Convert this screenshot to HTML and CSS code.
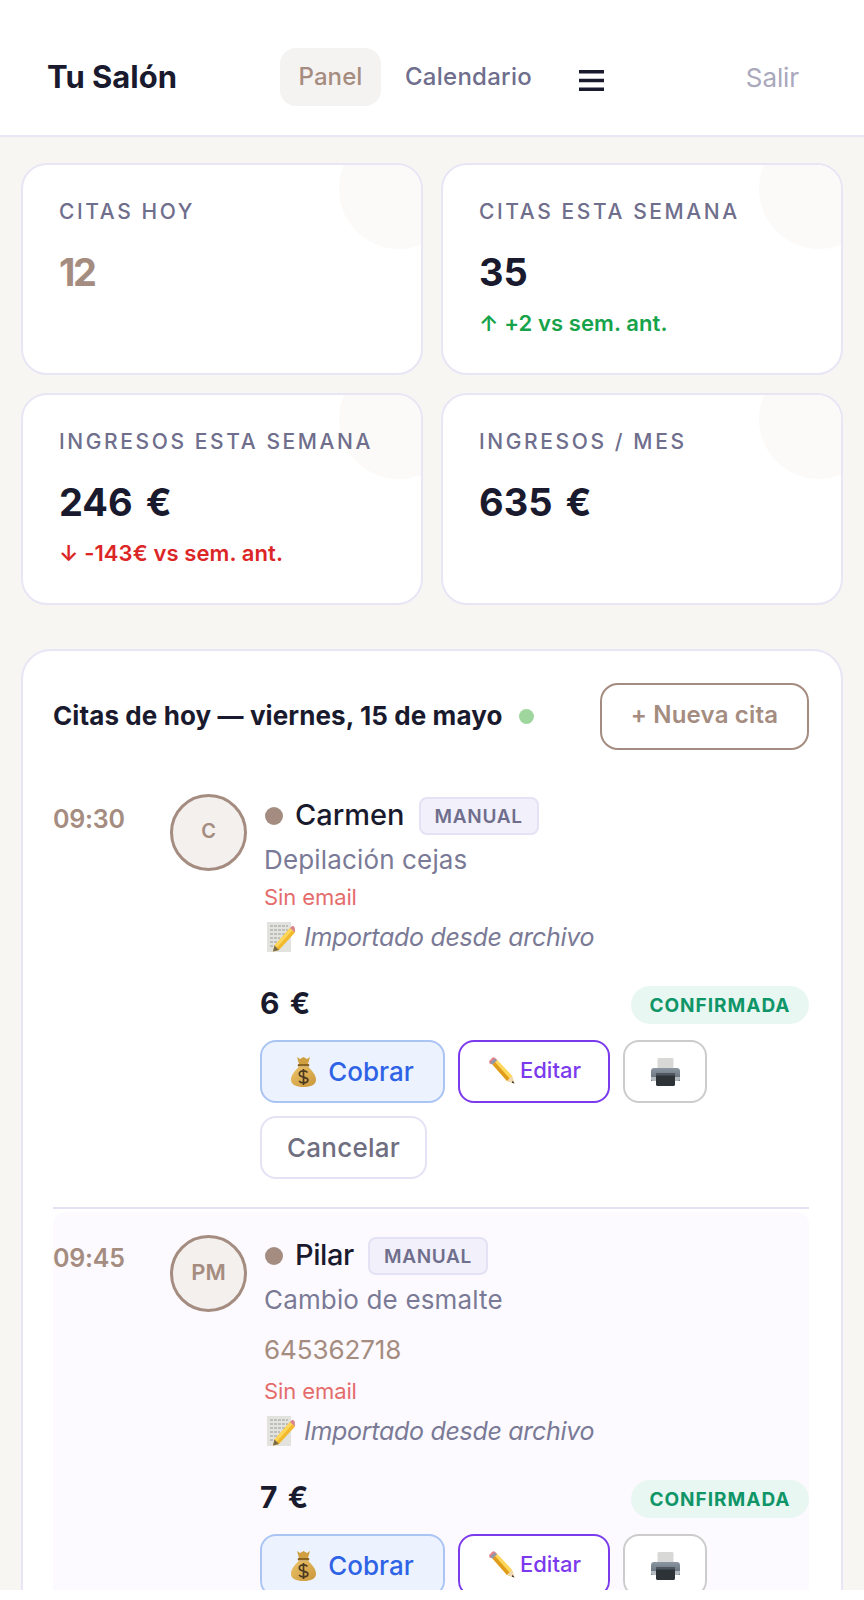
FILE: index.html
```html
<!DOCTYPE html>
<html lang="es">
<head>
<meta charset="utf-8">
<title>Tu Salón</title>
<link rel="stylesheet" href="styles.css">
</head>
<body>
<svg class="sprite" width="0" height="0" aria-hidden="true">
  <defs>
    <linearGradient id="g-bag" x1="0" y1="0" x2="1" y2="1">
      <stop offset="0" stop-color="#edc468"/>
      <stop offset="1" stop-color="#c9953a"/>
    </linearGradient>
    <linearGradient id="g-printer" x1="0" y1="0" x2="0" y2="1">
      <stop offset="0" stop-color="#8b96a0"/>
      <stop offset="1" stop-color="#5f6a75"/>
    </linearGradient>
  </defs>
  <symbol id="i-bag" viewBox="0 0 25 31">
    <path d="M6 1 9 3 12.500 1 16 3 19 1 17 8H8Z" fill="#cf9f42"/>
    <path d="M8 8h9c.8 0 1.300.5 1.300 1.200s-.5 1.300-1.300 1.300H8c-.8 0-1.300-.6-1.300-1.300S7.200 8 8 8Z" fill="#8a6420"/>
    <path d="M8 10.500h9C20.500 14.500 25 18.500 25 23.500 25 29 20 31 12.500 31S0 29 0 23.500C0 18.500 4.500 14.500 8 10.500Z" fill="url(#g-bag)"/>
    <path d="M16.500 16.500c-.9-1.100-2.300-1.700-4-1.700-2.500 0-4.200 1.200-4.200 3.100 0 4.200 8.600 2.300 8.600 6.200 0 1.700-1.900 2.800-4.400 2.800-1.800 0-3.400-.7-4.400-1.900M12.500 13v16" fill="none" stroke="#4a3a22" stroke-width="1.700"/>
  </symbol>
  <symbol id="i-pencil" viewBox="0 0 28 28">
    <path d="M5.500 8.500 10 4 25 20 27.500 27.500 20 25Z" fill="#f5bf2e"/>
    <path d="M10 4 25 20 22.500 22.500 7.500 6.500Z" fill="#ffd75a"/>
    <path d="M5.500 8.500 20 25 22.500 22.500 8 6Z" fill="#e09c1c"/>
    <path d="M25 20 27.500 27.500 20 25Z" fill="#eed9b4"/>
    <path d="M25.700 24.800 27.500 27.500 24.800 26.800Z" fill="#333"/>
    <path d="M2 5.200 5 2c1-.9 2.300-.9 3.200 0L10 4 5.500 8.500 2.500 7.500Z" fill="#e7828a"/>
    <path d="M3 6.500 7.800 2.500 10 4 5.500 8.500Z" fill="#8d98a8"/>
  </symbol>
  <symbol id="i-printer" viewBox="0 0 29 28">
    <path d="M6.500 1.500C6.500.7 7.200 0 8 0H21C21.800 0 22.500.7 22.500 1.500V11H6.500Z" fill="#d8d8d6"/>
    <path d="M3 10H26C27.700 10 29 11.300 29 13V23H0V13C0 11.300 1.300 10 3 10Z" fill="url(#g-printer)"/>
    <path d="M0 19H29V21C29 22.100 28.100 23 27 23H2C.9 23 0 22.100 0 21Z" fill="#b3bac0"/>
    <path d="M5 17H24V26.500C24 27.300 23.300 28 22.500 28H6.500C5.700 28 5 27.300 5 26.500Z" fill="#2e3338"/>
    <path d="M5 15H24V17.500H5Z" fill="#4d5660"/>
  </symbol>
  <symbol id="i-memo" viewBox="0 0 29 30">
    <path d="M1 0H25V30H1Z" fill="#e2e2de"/>
    <path d="M4 4H22M4 8H22M4 12H22M4 16H14M4 20H11M4 24H10" stroke="#9a9a98" stroke-width="1" stroke-dasharray="3 1"/>
    <path d="M24 6 29 10.500 13 28 7 29.500 8.500 23.500Z" fill="#f3b92c"/>
    <path d="M24 6 26.500 8.200 10.500 26 8.500 23.500Z" fill="#fbd65a"/>
    <path d="M8.500 23.500 13 28 7 29.500Z" fill="#7a6a48"/>
    <path d="M24 6 25.500 4.500C26.200 3.900 27 3.900 27.700 4.500L28.700 5.500C29 7 29 8 29 10.500Z" fill="#d9848c"/>
  </symbol>
</svg>
<div class="page">
  <header class="topbar">
    <div class="brand">Tu Salón</div>
    <nav class="nav">
      <a class="nav-link is-active">Panel</a>
      <a class="nav-link">Calendario</a>
    </nav>
    <svg class="burger" width="25" height="21" viewBox="0 0 25 21"><path d="M0 0h25v3.500H0zM0 8.750h25v3.500H0zM0 17.500h25V21H0z" fill="#1a1a2e"/></svg>
    <a class="logout">Salir</a>
  </header>

  <main class="main">
    <section class="stats">
      <article class="stat">
        <div class="stat-label">CITAS HOY</div>
        <div class="stat-value is-accent">12</div>
      </article>
      <article class="stat">
        <div class="stat-label">CITAS ESTA SEMANA</div>
        <div class="stat-value">35</div>
        <div class="stat-delta is-up">↑ +2 vs sem. ant.</div>
      </article>
      <article class="stat">
        <div class="stat-label">INGRESOS ESTA SEMANA</div>
        <div class="stat-value">246 €</div>
        <div class="stat-delta is-down">↓ -143€ vs sem. ant.</div>
      </article>
      <article class="stat">
        <div class="stat-label">INGRESOS / MES</div>
        <div class="stat-value">635 €</div>
      </article>
    </section>

    <section class="panel">
      <div class="panel-head">
        <h2 class="panel-title">Citas de hoy — viernes, 15 de mayo <span class="live-dot"></span></h2>
        <button class="new-btn">+ Nueva cita</button>
      </div>

      <article class="appt is-first">
        <div class="appt-time">09:30</div>
        <div class="avatar"><span class="avatar-c">C</span></div>
        <div class="appt-body">
          <div class="details">
            <div class="name-line"><span class="dot"></span><span class="name">Carmen</span><span class="tag">MANUAL</span></div>
            <div class="service">Depilación cejas</div>
            <div class="no-email">Sin email</div>
            <div class="note"><svg class="ic-memo"><use href="#i-memo"/></svg><em>Importado desde archivo</em></div>
          </div>
          <div class="foot"><span class="price">6 €</span><span class="status">CONFIRMADA</span></div>
          <div class="actions">
            <button class="btn btn-pay"><svg class="ic-bag"><use href="#i-bag"/></svg>Cobrar</button>
            <button class="btn btn-edit"><svg class="ic-pencil"><use href="#i-pencil"/></svg>Editar</button>
            <button class="btn btn-print"><svg class="ic-printer"><use href="#i-printer"/></svg></button>
            <button class="btn btn-cancel">Cancelar</button>
          </div>
        </div>
      </article>

      <article class="appt is-alt">
        <div class="appt-time">09:45</div>
        <div class="avatar">PM</div>
        <div class="appt-body">
          <div class="details">
            <div class="name-line"><span class="dot"></span><span class="name">Pilar</span><span class="tag">MANUAL</span></div>
            <div class="service">Cambio de esmalte</div>
            <div class="phone">645362718</div>
            <div class="no-email">Sin email</div>
            <div class="note"><svg class="ic-memo"><use href="#i-memo"/></svg><em>Importado desde archivo</em></div>
          </div>
          <div class="foot"><span class="price">7 €</span><span class="status">CONFIRMADA</span></div>
          <div class="actions">
            <button class="btn btn-pay"><svg class="ic-bag"><use href="#i-bag"/></svg>Cobrar</button>
            <button class="btn btn-edit"><svg class="ic-pencil"><use href="#i-pencil"/></svg>Editar</button>
            <button class="btn btn-print"><svg class="ic-printer"><use href="#i-printer"/></svg></button>
          </div>
        </div>
      </article>
    </section>
  </main>
</div>
</body>
</html>
```

FILE: styles.css
```css
* { box-sizing: border-box; }
html, body { margin: 0; background: #fff; }
body { font-family: Inter, "Liberation Sans", sans-serif; color: #1a1a2e; }
.sprite { position: absolute; }
.page { height: 1590px; overflow: hidden; background: #f7f6f3; }

.topbar { height: 137px; padding: 17px 65px 0 47px; display: flex; align-items: center; background: #fff; border-bottom: 2px solid #e8e6f5; }
.brand { width: 233px; font-size: 31px; font-weight: 700; }
.nav { display: flex; align-items: center; }
.nav-link { height: 58px; padding: 0 18px; margin-top: 1px; display: flex; align-items: center; font-size: 24px; font-weight: 500; color: #6f6e8c; border-radius: 16px; letter-spacing: .1px; }
.nav-link.is-active { background: #f5f3f1; color: #a58c80; padding: 0 18.5px; }
.nav-link + .nav-link { padding: 0 24px; font-weight: 450; letter-spacing: .25px; color: #6f6e8c; }
.burger { margin: 9px 0 0 23px; }
.logout { margin: 3px 0 0 auto; font-size: 26px; color: #a9a8bc; letter-spacing: -.1px; }

.main { padding: 26px 21px 0; }
.stats { display: grid; grid-template-columns: 1fr 1fr; gap: 18px; }
.stat { position: relative; overflow: hidden; height: 212px; padding: 33px 35px 0 36px; background: #fff; border: 2px solid #e8e6f5; border-radius: 26px; }
.stat::after { content: ""; position: absolute; top: -36px; right: -38px; width: 120px; height: 120px; border-radius: 50%; background: #fbfaf8; }
.stat-label { position: relative; z-index: 1; font-size: 21px; line-height: 28px; font-weight: 500; letter-spacing: 2.6px; color: #6f6e8c; white-space: nowrap; }
.stat-value { margin-top: 21px; font-size: 38px; line-height: 50px; font-weight: 700; letter-spacing: 0; word-spacing: 4px; color: #1a1a2e; }
.stat-value.is-accent { color: #a58c80; letter-spacing: -2.5px; }
.stat-delta { margin-top: 12px; font-size: 22px; line-height: 28px; font-weight: 600; letter-spacing: .1px; }
.is-up { color: #16a34a; }
.is-down { color: #dc2626; }

.panel { margin-top: 44px; padding: 32px 32px 0 30px; background: #fff; border: 2px solid #e8e6f5; border-radius: 30px 30px 0 0; }
.panel-head { display: flex; align-items: center; justify-content: space-between; }
.panel-title { margin: -2px 0 0; font-size: 26px; font-weight: 700; letter-spacing: .1px; display: flex; align-items: center; gap: 10px; white-space: pre; }
.live-dot { width: 15px; height: 15px; border-radius: 50%; background: #9ed69e; margin-top: 2px; }
.new-btn { width: 209px; height: 67px; font: 600 24px Inter, sans-serif; letter-spacing: .2px; color: #a58c80; background: #fff; border: 2px solid #a58c80; border-radius: 18px; padding: 0 0 4px; }

.appt { display: grid; grid-template-columns: 117px 77px 1fr; column-gap: 0; padding: 26px 0 28px; }
.appt.is-first { margin-top: 18px; border-bottom: 2px solid #e4e2f2; }
.appt.is-alt { margin-top: 3px; padding-top: 23px; background: #fcfafe; border-radius: 12px 12px 0 0; }
.appt-time { padding-top: 9px; font-size: 25px; font-weight: 600; line-height: 32px; color: #a58c80; letter-spacing: -.2px; }
.is-alt .appt-time { padding-top: 7px; }
.avatar { width: 77px; height: 77px; padding-bottom: 4px; display: flex; align-items: center; justify-content: center; border: 3px solid #a58c80; border-radius: 50%; background: #f3f0ee; font-size: 22px; font-weight: 600; color: #a58c80; }
.avatar-c { font-size: 20px; }
.appt-body { padding-left: 13px; min-width: 0; }
.details { padding: 3px 0 0 4px; }
.is-alt .details { padding-top: 2px; }
.name-line { display: flex; align-items: center; height: 38px; }
.dot { width: 18px; height: 18px; border-radius: 50%; background: #a58c80; margin: 0 12px 0 1px; }
.name { padding-bottom: 4px; font-size: 29px; font-weight: 500; letter-spacing: 0; }
.is-alt .name { letter-spacing: -.4px; }
.tag { height: 38px; margin-left: 14px; padding: 0 14px; display: flex; align-items: center; background: #f1f0fb; border: 2px solid #e4e2f5; border-radius: 8px; font-size: 19px; font-weight: 600; letter-spacing: .7px; color: #6f6e8c; }
.service { margin-top: 7px; font-size: 26px; line-height: 36px; letter-spacing: .15px; color: #7a7a96; }
.phone { margin-top: 14px; margin-bottom: 7px; font-size: 26px; line-height: 36px; letter-spacing: -.1px; color: #a58c80; }
.no-email { margin-top: 3px; font-size: 22px; line-height: 32px; letter-spacing: -.1px; color: #e46c6c; }
.note { margin-top: 5px; height: 38px; display: flex; align-items: center; font-size: 25px; letter-spacing: -.3px; color: #7a7a96; }
.ic-memo { width: 29px; height: 30px; margin: 0 9px 0 2px; flex: none; }
.foot { margin-top: 30px; height: 38px; display: flex; align-items: center; justify-content: space-between; }
.price { padding-bottom: 4px; font-size: 30px; font-weight: 700; letter-spacing: -.4px; word-spacing: 4px; }
.status { height: 38px; width: 178px; display: flex; align-items: center; justify-content: center; border-radius: 19px; background: #e8f7f1; font-size: 19px; font-weight: 700; letter-spacing: 1px; color: #0f9568; }
.actions { margin-top: 16px; display: flex; flex-wrap: wrap; gap: 13px; }
.btn { height: 63px; display: flex; align-items: center; justify-content: center; font-family: Inter, sans-serif; font-weight: 500; background: #fff; border: 2px solid #ccc; border-radius: 16px; padding: 0; }
.btn-pay { width: 185px; background: #edf3fe; border-color: #aac4f3; color: #2f63e6; font-size: 26px; gap: 12px; }
.btn-edit { width: 152px; padding-bottom: 3px; border-color: #7c3aed; color: #7c3aed; font-size: 22px; gap: 5px; }
.btn-print { width: 84px; }
.btn-cancel { width: 167px; border-color: #e4e2f5; color: #6f6e80; font-size: 26px; font-weight: 450; letter-spacing: .25px; }
.ic-bag { width: 25px; height: 31px; }
.ic-pencil { width: 28px; height: 28px; }
.ic-printer { width: 29px; height: 28px; }
```
